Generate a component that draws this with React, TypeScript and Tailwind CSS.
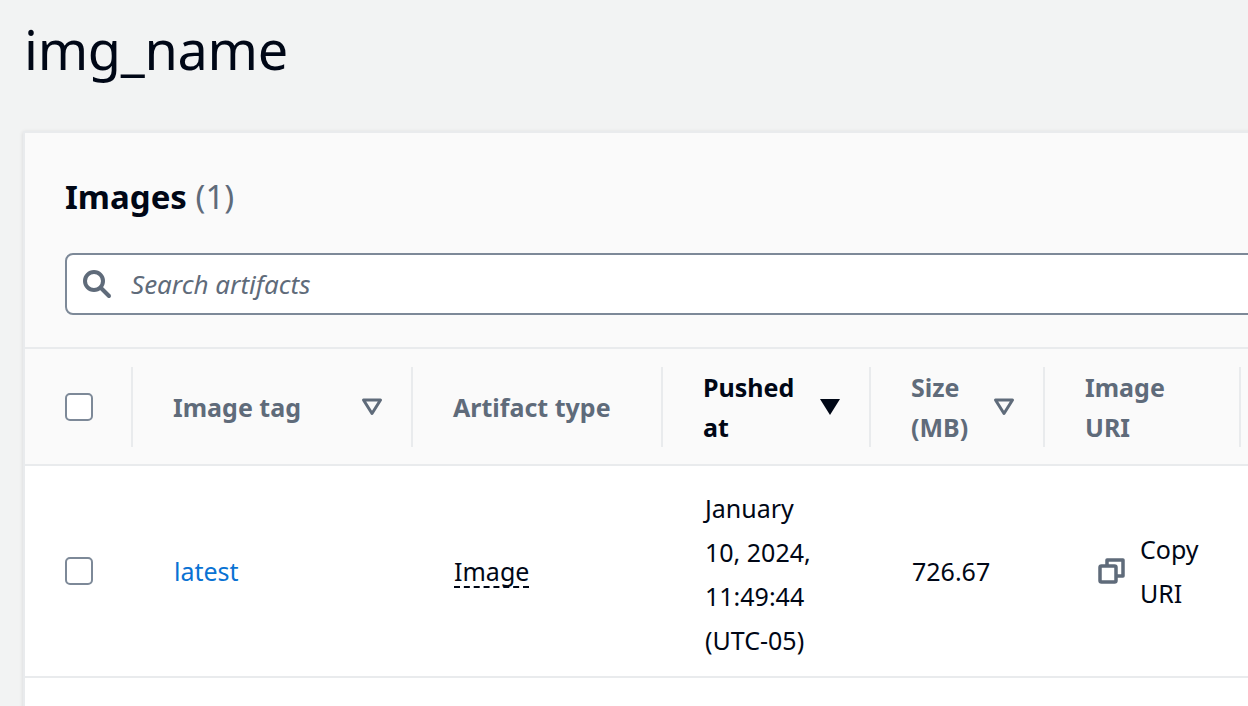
import React from 'react';

const FONT = "font-['Noto_Sans','Open_Sans',sans-serif]";

const SortDown = ({ filled }: { filled?: boolean }) =>
  filled ? (
    <svg width="22" height="18" viewBox="0 0 22 18">
      <path d="M1 1h20L11 17z" fill="#000716" />
    </svg>
  ) : (
    <svg width="22" height="18" viewBox="0 0 22 18">
      <path d="M2.5 2h17L11 15.5z" fill="none" stroke="#5f6b7a" strokeWidth="3" strokeLinejoin="round" />
    </svg>
  );

const Checkbox = () => (
  <div className="w-[28px] h-[28px] rounded-[5px] border-[2px] border-[#7d8998] bg-white" />
);

const Sep = () => <div className="w-[2px] h-[80px] bg-[#e9ebed] shrink-0" />;

const App = () => {
  return (
    <div className={`${FONT} w-[1248px] h-[706px] overflow-hidden bg-[#f2f3f3] text-[#000716]`}>
      <h1 className="pl-[24px] pt-[14px] h-[131px] text-[54px] leading-[70px] font-normal tracking-[-0.3px]">img_name</h1>
      <div className="ml-[23px] w-[1300px] bg-white border-l-[2px] border-t-[2px] border-[#e9ebed] shadow-[0_1px_4px_rgba(0,7,22,0.12)]">
        <div className="bg-[#fafafa] px-[40px] pt-[42px] pb-[32px] border-b-[2px] border-[#e9ebed]">
          <h2 className="text-[33px] leading-[44px] font-bold">
            Images <span className="font-normal text-[#5f6b7a]">(1)</span>
          </h2>
          <div className="mt-[34px] h-[62px] rounded-[8px] border-[2px] border-[#7d8998] bg-white flex items-center pl-[14px] gap-[18px]">
            <svg width="32" height="32" viewBox="0 0 32 32" fill="none" stroke="#5f6b7a" strokeWidth="4" strokeLinecap="round">
              <circle cx="13" cy="13" r="9" />
              <path d="M20 20l8 8" />
            </svg>
            <span className="italic text-[26px] text-[#5f6b7a]">Search artifacts</span>
          </div>
        </div>
        <div className="bg-[#fafafa] h-[117px] flex items-center border-b-[2px] border-[#e9ebed] text-[25px] leading-[40px] font-bold text-[#5f6b7a]">
          <div className="w-[106px] pl-[40px] shrink-0"><Checkbox /></div>
          <Sep />
          <div className="w-[278px] pl-[40px] pr-[28px] flex items-center justify-between shrink-0">
            <span>Image tag</span><SortDown />
          </div>
          <Sep />
          <div className="w-[248px] pl-[40px] shrink-0">Artifact type</div>
          <Sep />
          <div className="w-[206px] pl-[40px] pr-[28px] flex items-center justify-between shrink-0 text-[#000716]">
            <span>Pushed<br />at</span><SortDown filled />
          </div>
          <Sep />
          <div className="w-[172px] pl-[40px] pr-[28px] flex items-center justify-between shrink-0">
            <span>Size<br />(MB)</span><SortDown />
          </div>
          <Sep />
          <div className="w-[194px] pl-[40px] shrink-0">Image<br />URI</div>
          <Sep />
        </div>
        <div className="h-[212px] flex items-center border-b-[2px] border-[#e9ebed] text-[25px] leading-[44px]">
          <div className="w-[108px] pl-[40px] shrink-0"><Checkbox /></div>
          <div className="w-[280px] pl-[41px] shrink-0 text-[#0972d3]">latest</div>
          <div className="w-[250px] pl-[41px] shrink-0">
            <span className="border-b-[2px] border-dashed border-[#000716] leading-[30px] inline-block">Image</span>
          </div>
          <div className="w-[208px] pl-[42px] pt-[6px] shrink-0">January<br />10, 2024,<br />11:49:44<br />(UTC-05)</div>
          <div className="w-[174px] pl-[41px] shrink-0">726.67</div>
          <div className="pl-[53px] flex items-center gap-[14px]">
            <svg width="28" height="28" viewBox="0 0 28 28" fill="none" stroke="#5f6b7a" strokeWidth="3.5" strokeLinejoin="round">
              <rect x="2" y="9" width="16" height="16" rx="1.5" />
              <path d="M9 9V3h16v16h-7" />
            </svg>
            <span>Copy<br />URI</span>
          </div>
        </div>
        <div className="h-[40px]" />
      </div>
    </div>
  );
};

export default App;
